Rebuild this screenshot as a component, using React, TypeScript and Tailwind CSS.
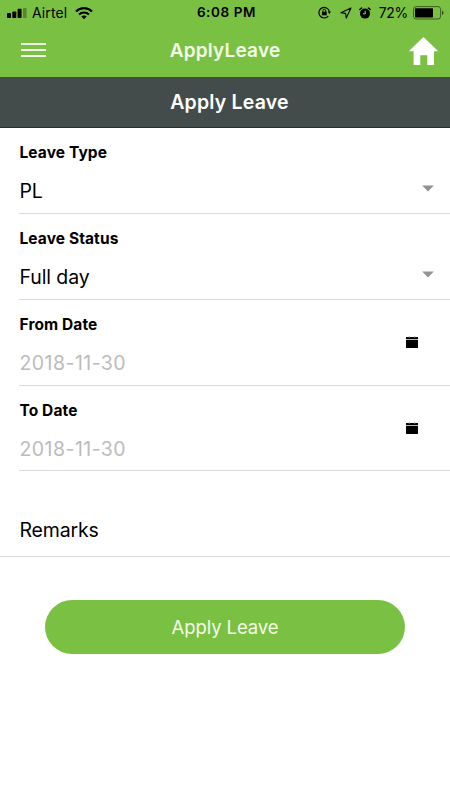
import { useState } from "react";
import clsx from "clsx";

interface FieldProps {
	label: string;
	value: string;
	kind: "select" | "date";
	className?: string;
	onClick?: () => void;
}

function CaretIcon() {
	return (
		<svg width="12" height="7" viewBox="0 0 12 7" className="mr-[16px]">
			<path d="M0.2 0.4h11.6L6 6.5z" fill="#939393" />
		</svg>
	);
}

function CalendarIcon() {
	return (
		<svg width="12" height="12" viewBox="0 0 12 12" className="mr-[32.5px]">
			<path d="M0 1h12v11H0z" fill="#000" />
			<path d="M0 3.5h12" stroke="#b5b5b5" strokeWidth="1" />
			<path d="M2.5 0.4h1.6v1.2H2.5zM7.8 0.4h1.6v1.2H7.8z" fill="#999" />
		</svg>
	);
}

function SignalIcon() {
	return (
		<svg width="20" height="10" viewBox="0 0 20 10">
			<rect x="0" y="5" width="4" height="5" rx="0.8" />
			<rect x="5.3" y="3.4" width="4" height="6.6" rx="0.8" />
			<rect x="10.6" y="0.8" width="4" height="9.2" rx="0.8" />
			<rect x="16" y="0" width="3.6" height="10" rx="0.8" opacity="0.3" />
		</svg>
	);
}

function WifiIcon() {
	return (
		<svg width="18" height="12" viewBox="0 0 18 12" fill="none" stroke="#000" strokeWidth="2.1">
			<path d="M1 4.5C5.6 0 12.4 0 17 4.5" />
			<path d="M4 7.6c2.9-2.8 7.1-2.8 10 0" />
			<path d="M6.3 9.6c1.6-1.4 3.8-1.4 5.4 0L9 12.2z" fill="#000" stroke="none" />
		</svg>
	);
}

function RotationLockIcon() {
	return (
		<svg width="13" height="13" viewBox="0 0 13 13" fill="none" stroke="#000">
			<path d="M10.3 10.1A5.3 5.3 0 1 1 11.4 5.6" strokeWidth="1.2" />
			<path d="M9.7 5.5h3.3l-1.6 2.4z" fill="#000" stroke="none" />
			<path d="M3.9 5.7h4.8v3.6H3.9z" fill="#000" stroke="none" />
			<path d="M4.9 6V4.6a1.4 1.4 0 0 1 2.8 0V6" strokeWidth="0.9" />
		</svg>
	);
}

function LocationIcon() {
	return (
		<svg width="12" height="12" viewBox="0 0 12 12" fill="none" stroke="#000" strokeWidth="1.1">
			<path d="M11 1 .9 5.7l4.7.7.7 4.7z" strokeLinejoin="round" />
		</svg>
	);
}

function AlarmIcon() {
	return (
		<svg width="12" height="12" viewBox="0 0 12 12">
			<circle cx="6" cy="6.6" r="5" />
			<path
				d="M.8 2.6 2.6 1M11.2 2.6 9.4 1"
				stroke="#000"
				strokeWidth="1.4"
				strokeLinecap="round"
			/>
			<path d="M6.2 3.9v3H4" stroke="#a9dc7c" strokeWidth="1" fill="none" />
		</svg>
	);
}

function BatteryIcon() {
	return (
		<svg width="31" height="14" viewBox="0 0 31 14">
			<rect x="0.6" y="0.6" width="27" height="12.4" rx="2.6" fill="none" stroke="#000" strokeOpacity="0.5" />
			<rect x="2" y="2.2" width="18" height="9.2" rx="0.6" />
			<path d="M29 4.8c2 .6 2 3.6 0 4.2z" opacity="0.6" />
		</svg>
	);
}

function StatusBar() {
	return (
		<div className="grid h-6 grid-cols-[1fr_auto_1fr] items-center text-[14px] leading-none text-black">
			<div className="flex items-center pt-px pl-[7px]">
				<SignalIcon />
				<span className="ml-[5px] tracking-[0.1px]">Airtel</span>
				<span className="ml-[8px]">
					<WifiIcon />
				</span>
			</div>
			<span className="pt-px pl-[3px] text-[13.5px] font-semibold tracking-[0.6px]">6:08 PM</span>
			<div className="flex items-center justify-end pt-px pr-[6px]">
				<RotationLockIcon />
				<span className="ml-[9px]">
					<LocationIcon />
				</span>
				<span className="ml-[7px]">
					<AlarmIcon />
				</span>
				<span className="ml-[8px] tracking-[-0.3px]">72%</span>
				<span className="ml-[5px]">
					<BatteryIcon />
				</span>
			</div>
		</div>
	);
}

function NavBar() {
	return (
		<div className="grid h-[53px] grid-cols-[1fr_auto_1fr] items-center pb-px">
			<button className="ml-[21px] flex w-[25px] flex-col gap-1" aria-label="Menu">
				<span className="h-[2.3px] w-full bg-white/90" />
				<span className="h-[2.3px] w-full bg-white/90" />
				<span className="h-[2.3px] w-full bg-white/90" />
			</button>
			<h1 className="text-[19px] leading-none font-semibold tracking-[0.2px] text-[#f4fbe9]">ApplyLeave</h1>
			<button className="mr-[12px] justify-self-end pt-0.5" aria-label="Home">
				<svg width="29" height="28" viewBox="0 0 29 28" fill="#fff">
					<path d="M14.5 0 29.3 14.2H25V28h-6.7V18.3h-7V28H4.6V14.2H-.3z" />
				</svg>
			</button>
		</div>
	);
}

function Field({ label, value, kind, className, onClick }: FieldProps) {
	return (
		<div className={clsx("ml-[19px] border-b border-[#d9d9d9] pt-[15px] pl-[0.5px]", className)} onClick={onClick}>
			<div className="flex justify-between">
				<div className="flex flex-col">
					<span className="h-5 text-[15.5px] leading-5 font-bold tracking-[0.1px]">{label}</span>
					<span
						className={clsx(
							"mt-[15px] h-[26px] text-[19.5px] leading-[26px]",
							kind === "date" ? "tracking-[0.45px] text-[#bcbcbc]" : "tracking-[-0.1px]",
						)}
					>
						{value}
					</span>
				</div>
				<span className={kind === "select" ? "pt-[42px]" : "pt-[21px]"}>
					{kind === "select" ? <CaretIcon /> : <CalendarIcon />}
				</span>
			</div>
		</div>
	);
}

export default function App() {
	const [fullDay, setFullDay] = useState(true);

	return (
		<div className="h-screen w-full overflow-hidden bg-white font-['Inter',sans-serif] text-black">
			<header className="bg-[#7ac143]">
				<StatusBar />
				<NavBar />
			</header>
			<div className="flex h-[51px] items-center justify-center border-b border-[#262e2d] bg-[#444c4b] pt-0.5 pl-[9px] text-[19.5px] font-semibold tracking-[0.2px] text-white">
				Apply Leave
			</div>
			<main>
				<Field label="Leave Type" value="PL" kind="select" className="h-[86px]" />
				<Field
					label="Leave Status"
					value={fullDay ? "Full day" : "Half day"}
					kind="select"
					className="h-[86px]"
					onClick={() => setFullDay(!fullDay)}
				/>
				<Field label="From Date" value="2018-11-30" kind="date" className="h-[86px]" />
				<Field label="To Date" value="2018-11-30" kind="date" className="h-[85px]" />
				<div className="h-[86px] border-b border-[#d9d9d9] pt-[46px] pl-[19.5px] text-[19.5px] leading-[26px] tracking-[-0.15px]">
					Remarks
				</div>
				<button className="mx-[45px] mt-[43px] flex h-[54px] w-[360px] items-center justify-center rounded-full bg-[#7ac143] pt-px text-[18.5px] tracking-[-0.1px] text-[#f4fbe9]">
					Apply Leave
				</button>
			</main>
		</div>
	);
}
